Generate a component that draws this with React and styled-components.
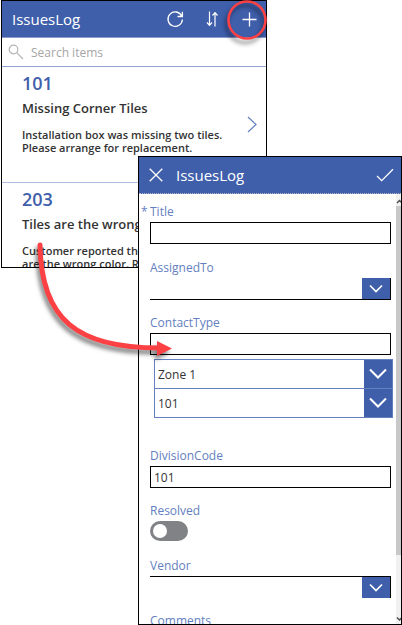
import React from "react";
import styled, { createGlobalStyle, css } from "styled-components";

const blue = "#3f5fab";
const softBlue = "#6480c0";

const GlobalStyle = createGlobalStyle`
  *, *::before, *::after { box-sizing: border-box; }
  body {
    margin: 0;
    background: #fff;
    color: #333;
    font-family: "Open Sans", "Noto Sans", sans-serif;
  }
  button, input, select { font: inherit; color: inherit; }
  h1, h2, h3, p, ul { margin: 0; padding: 0; }
`;

const Stage = styled.main`
  position: relative;
  display: grid;
  grid-template-columns: 1fr;
  min-height: 100vh;
  overflow: hidden;
`;

const Screen = styled.section`
  grid-area: 1 / 1;
  display: flex;
  flex-direction: column;
  min-width: 0;
  overflow: hidden;
  border: 1px solid #000;
  background: #fff;
`;

const ListScreen = styled(Screen)`
  align-self: start;
  height: 268px;
  margin: 0 135px 0 1px;
`;

const FormScreen = styled(Screen)`
  height: calc(100vh - 156px);
  margin: 156px 0 0 138px;
`;

const Header = styled.header`
  flex: none;
  display: flex;
  align-items: center;
  height: 37px;
  color: #fff;
  background: ${blue};
  border-bottom: 1px ${(p) => (p.$dotted ? "dotted #b8bcc8" : "solid #8d9dcb")};
  padding: ${(p) => (p.$dotted ? "0 6px 0 7px" : "0 7px 0 10px")};
`;

const ScreenTitle = styled.h1`
  flex: 1;
  font-size: 15px;
  line-height: 22px;
  font-weight: 400;
`;

const IconButton = styled.button`
  display: grid;
  place-items: center;
  width: 20px;
  height: 24px;
  padding: 0;
  border: 0;
  background: none;
  color: ${(p) => (p.$soft ? softBlue : "#fff")};
`;

const Actions = styled.div`
  display: flex;
  gap: 17px;
`;

const FormClose = styled(IconButton)`
  margin-right: 10px;
`;

const SearchBar = styled.label`
  flex: none;
  display: flex;
  align-items: center;
  gap: 6px;
  height: 29px;
  padding-left: 6px;
  border-bottom: 1px solid #92a5d3;
`;

const SearchInput = styled.input`
  flex: 1;
  min-width: 0;
  padding: 0;
  border: 0;
  outline: 0;
  background: none;
  font-size: 12px;
  &::placeholder { color: #a6a6a6; opacity: 1; }
`;

const Issues = styled.ul`
  list-style: none;
`;

const Issue = styled.li`
  display: flex;
  align-items: center;
  justify-content: space-between;
  height: 116px;
  padding: 0 4px 0 20px;
  border-bottom: 1px solid #b0bddf;
`;

const IssueText = styled.div`
  align-self: start;
  padding-top: 4px;
`;

const IssueNumber = styled.h2`
  font-size: 18px;
  line-height: 24px;
  font-weight: 600;
  color: ${blue};
`;

const IssueTitle = styled.h3`
  margin: 3px 0 10px;
  font-size: 13px;
  line-height: 20px;
  font-weight: 600;
  white-space: nowrap;
`;

const IssueBody = styled.p`
  font-size: 11px;
  line-height: 13px;
  font-weight: 600;
  white-space: pre;
`;

const FormArea = styled.div`
  flex: 1;
  display: flex;
  min-height: 0;
`;

const Form = styled.form`
  flex: 1;
  display: flex;
  flex-direction: column;
  gap: 11px;
  min-width: 0;
  padding: 6px 5px 0 11px;
  overflow: hidden;
`;

const Field = styled.div`
  flex: none;
  display: flex;
  flex-direction: column;
  &:first-child { margin-bottom: 1px; }
`;

const Label = styled.label`
  position: relative;
  align-self: start;
  padding-top: 2px;
  font-size: 12px;
  line-height: 20px;
  color: ${softBlue};
  ${(p) =>
    p.$required &&
    css`
      &::before {
        content: "*";
        position: absolute;
        left: -9px;
      }
    `}
`;

const TextBox = styled.input`
  width: 100%;
  height: 22px;
  padding: 0 3px;
  border: 1px solid #000;
  border-radius: 0;
  outline: 0;
  background: #fff;
  font-size: 12px;
`;

const edges = {
  bottom: "border-color: transparent #000 #000 transparent; border-width: 0 1px 1px 0;",
  top: "border-color: #000 #000 transparent transparent; border-width: 1px 1px 0 0;",
  box: `border-color: ${softBlue}; border-width: 1px; height: 30px;`,
};

const DropDown = styled.div`
  display: grid;
  grid-template-columns: 1fr 28px;
  height: 22px;
  border-style: solid;
  ${(p) => edges[p.$edge]}
`;

const Select = styled.select`
  grid-area: 1 / 1 / 2 / 3;
  min-width: 0;
  padding: 0 32px 0 3px;
  border: 0;
  outline: 0;
  appearance: none;
  background: none;
  font-size: 12px;
`;

const SelectArrow = styled.span`
  grid-area: 1 / 2;
  display: grid;
  place-items: center;
  background: ${blue};
  color: #fff;
  pointer-events: none;
`;

const Choices = styled.div`
  display: flex;
  flex-direction: column;
  margin: 4px -2px 15px 4px;
  & > div + div { margin-top: -1px; }
`;

const Toggle = styled.input`
  appearance: none;
  display: flex;
  align-items: center;
  width: 38px;
  height: 20px;
  margin: 0 0 2px;
  padding: 0 3px;
  border-radius: 10px;
  background: #808285;
  &::before {
    content: "";
    width: 14px;
    height: 14px;
    border-radius: 50%;
    background: #fff;
  }
  &:checked { justify-content: flex-end; }
`;

const ScrollBar = styled.div`
  flex: none;
  display: grid;
  grid-template-rows: 12px 349px 1fr 8px;
  width: 5px;
  overflow: hidden;
  background: #f1f1f1;
  color: #505050;
`;

const Thumb = styled.div`
  background: #c8c8c8;
`;

const Annotation = styled.svg`
  position: absolute;
  top: 0;
  left: 0;
  pointer-events: none;
  filter: drop-shadow(-2px 4px 2px rgba(0, 0, 0, 0.5));
`;

const Icon = ({ w, h, d, stroke = 1 }) => (
  <svg width={w} height={h} viewBox={`0 0 ${w} ${h}`} fill="none" stroke="currentColor" strokeWidth={stroke} aria-hidden="true">
    <path d={d} />
  </svg>
);

function Picker({ id, label, edge, options = [""], large }) {
  return (
    <DropDown $edge={edge}>
      <Select id={id} aria-label={label}>
        {options.map((o) => (
          <option key={o}>{o}</option>
        ))}
      </Select>
      <SelectArrow>
        {large ? (
          <Icon w={18} h={12} stroke={2} d="M1 1.5L9 9.5L17 1.5" />
        ) : (
          <Icon w={14} h={10} stroke={1.7} d="M1 1.5L7 7.5L13 1.5" />
        )}
      </SelectArrow>
    </DropDown>
  );
}

const issues = [
  { id: "101", title: "Missing Corner Tiles", body: "Installation box was missing two tiles.\nPlease arrange for replacement." },
  { id: "203", title: "Tiles are the wrong color", body: "Customer reported that the tiles\nare the wrong color. Replace them." },
];

export default function App() {
  return (
    <>
      <GlobalStyle />
      <Stage>
        <ListScreen aria-label="Issues">
          <Header>
            <ScreenTitle>IssuesLog</ScreenTitle>
            <Actions>
              <IconButton aria-label="Refresh">
                <Icon w={18} h={18} stroke={1.3} d="M15.7 6A7.2 7.2 0 1 0 16.4 9.5M16.4 1.8V6.5H11.5" />
              </IconButton>
              <IconButton aria-label="Sort">
                <Icon w={12} h={16} stroke={1.2} d="M3.5 .5V14M1 11.5L3.5 14.3L6 11.5M9 15.5V2M6.5 4.5L9 1.7L11.5 4.5" />
              </IconButton>
              <IconButton aria-label="New issue">
                <Icon w={15} h={15} stroke={1.3} d="M7.5 .5V14.5M.5 7.5H14.5" />
              </IconButton>
            </Actions>
          </Header>
          <SearchBar>
            <svg width="17" height="16" viewBox="0 0 17 16" fill="none" stroke="#b5b5b5" strokeWidth="1.2" aria-hidden="true">
              <circle cx="5.5" cy="5.5" r="4.3" />
              <path d="M8.7 8.7L15 15" />
            </svg>
            <SearchInput type="search" aria-label="Search items" placeholder="Search items" />
          </SearchBar>
          <Issues>
            {issues.map((issue) => (
              <Issue key={issue.id}>
                <IssueText>
                  <IssueNumber>{issue.id}</IssueNumber>
                  <IssueTitle>{issue.title}</IssueTitle>
                  <IssueBody>{issue.body}</IssueBody>
                </IssueText>
                <IconButton $soft aria-label={`Open issue ${issue.id}`}>
                  <Icon w={10} h={17} stroke={1.2} d="M1 1L9 8.5L1 16" />
                </IconButton>
              </Issue>
            ))}
          </Issues>
        </ListScreen>

        <FormScreen aria-label="New issue">
          <Header $dotted>
            <FormClose aria-label="Close">
              <Icon w={14} h={14} stroke={1.3} d="M.7 .7L13.3 13.3M13.3 .7L.7 13.3" />
            </FormClose>
            <ScreenTitle>IssuesLog</ScreenTitle>
            <IconButton aria-label="Save">
              <Icon w={18} h={14} stroke={1.3} d="M1 8L5.7 12.7L17 1.3" />
            </IconButton>
          </Header>
          <FormArea>
            <Form>
              <Field>
                <Label htmlFor="title" $required>Title</Label>
                <TextBox id="title" />
              </Field>
              <Field>
                <Label htmlFor="assigned">AssignedTo</Label>
                <Picker id="assigned" edge="bottom" />
              </Field>
              <Field>
                <Label htmlFor="contact">ContactType</Label>
                <TextBox id="contact" />
                <Choices>
                  <Picker label="Zone" edge="box" options={["Zone 1"]} large />
                  <Picker label="Code" edge="box" options={["101"]} large />
                </Choices>
              </Field>
              <Field>
                <Label htmlFor="division">DivisionCode</Label>
                <TextBox id="division" defaultValue="101" />
              </Field>
              <Field>
                <Label htmlFor="resolved">Resolved</Label>
                <Toggle id="resolved" type="checkbox" role="switch" />
              </Field>
              <Field>
                <Label htmlFor="vendor">Vendor</Label>
                <Picker id="vendor" edge="top" />
              </Field>
              <Field>
                <Label htmlFor="comments">Comments</Label>
                <TextBox id="comments" />
              </Field>
            </Form>
            <ScrollBar aria-hidden="true">
              <Icon w={7} h={12} stroke={1.5} d="M1 9L3.5 6.5L6 9" />
              <Thumb />
              <span />
              <Icon w={7} h={8} stroke={1.5} d="M1 1.5L3.5 4L6 1.5" />
            </ScrollBar>
          </FormArea>
        </FormScreen>

        <Annotation width="280" height="370" viewBox="0 0 280 370" fill="none" stroke="#fb4144" aria-hidden="true">
          <circle cx="247" cy="20" r="18.5" strokeWidth="2.6" />
          <path d="M40 245C41 320 78 348 159 348" strokeWidth="5" strokeLinecap="round" />
          <path d="M157 341L172 348.5L157 356Z" fill="#fb4144" stroke="none" />
        </Annotation>
      </Stage>
    </>
  );
}
